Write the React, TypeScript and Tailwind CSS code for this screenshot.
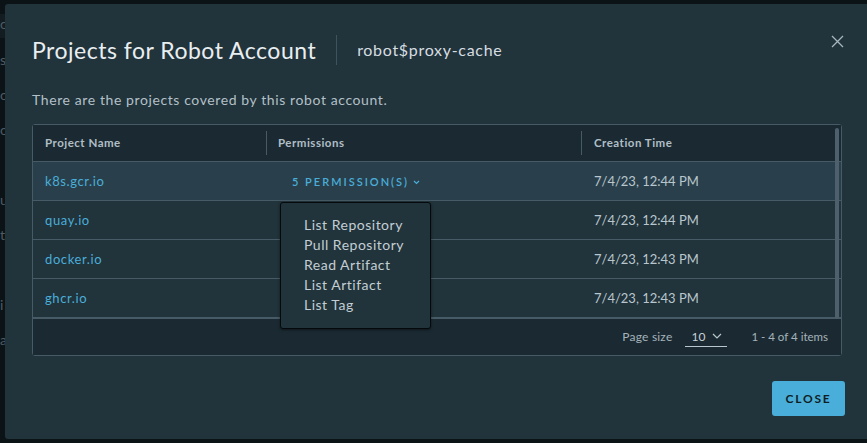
import React from "react";

const rows = [
  { name: "k8s.gcr.io", time: "7/4/23, 12:44 PM", hl: true },
  { name: "quay.io", time: "7/4/23, 12:44 PM", hl: false },
  { name: "docker.io", time: "7/4/23, 12:43 PM", hl: false },
  { name: "ghcr.io", time: "7/4/23, 12:43 PM", hl: false },
];

const perms = ["List Repository", "Pull Repository", "Read Artifact", "List Artifact", "List Tag"];

export default function App() {
  return (
    <div
      className="relative w-[867px] h-[443px] overflow-hidden bg-[#0b1317]"
      style={{ fontFamily: "Lato, 'Open Sans', sans-serif" }}
    >
      {/* backdrop */}
      <div className="flex flex-col text-[14px] text-[#4f5b63] leading-[20px] pt-[14px]">
        <div className="h-[24px] bg-[#121c21] pl-0">c</div>
        <div className="h-[35px] pt-[12px]">s</div>
        <div className="h-[35px] pt-[12px]">o</div>
        <div className="h-[70px] pt-[12px]">o</div>
        <div className="h-[35px] pt-[12px]">u</div>
        <div className="h-[70px] pt-[12px]">t</div>
        <div className="h-[35px] pt-[12px]">i</div>
        <div className="h-[35px] pt-[12px]">a</div>
      </div>

      {/* modal */}
      <div className="absolute left-[5px] top-[4px] w-[875px] h-[435px] bg-[#21333b] rounded-[3px] pl-[27px]">
        <div className="flex items-center pt-[31px] h-[61px]">
          <div className="text-[23px] text-[#e9eef1] leading-[30px] tracking-[0.5px]">Projects for Robot Account</div>
          <div className="w-px h-[30px] bg-[#3e5360] mx-[20px]" />
          <div className="text-[16px] text-[#d6dde1] leading-[30px] tracking-[0.7px]">robot$proxy-cache</div>
          <svg className="ml-auto mr-[36px] -mt-[18px]" width="13" height="13" viewBox="0 0 13 13">
            <path d="M1 1 L12 12 M12 1 L1 12" stroke="#a8b6bf" strokeWidth="1.3" />
          </svg>
        </div>

        <div className="mt-[25px] text-[14px] leading-[20px] text-[#b3c0c8] tracking-[0.6px]">
          There are the projects covered by this robot account.
        </div>

        {/* table */}
        <div className="relative mt-[14px] w-[810px] border border-[#475b66] rounded-[3px]">
          {/* header */}
          <div className="flex h-[37px] bg-[#1b2a32] border-b border-[#475b66] text-[11.5px] font-bold text-[#b0bec6] tracking-[0.5px]">
            <div className="w-[233px] flex items-center pl-[12px]">Project Name</div>
            <div className="w-[315px] flex items-center">
              <div className="w-px h-[24px] bg-[#475b66]" />
              <div className="pl-[11px]">Permissions</div>
            </div>
            <div className="flex-1 flex items-center">
              <div className="w-px h-[24px] bg-[#475b66]" />
              <div className="pl-[12px]">Creation Time</div>
            </div>
          </div>

          {rows.map((r, i) => (
            <div
              key={r.name}
              className={
                "flex h-[39px] pt-[2px] border-b border-[#475b66] text-[13px] " +
                (r.hl ? "bg-[#29404c]" : "bg-[#21333b]")
              }
            >
              <div className="w-[233px] flex items-center pl-[12px] text-[#4aaed9] tracking-[0.6px]">{r.name}</div>
              <div className="w-[315px] flex items-center pl-[26px]">
                {i === 0 && (
                  <div className="flex items-center gap-[4px] text-[11px] tracking-[2px] text-[#4aaed9] font-semibold">
                    5 PERMISSION(S)
                    <svg width="7" height="5" viewBox="0 0 7 5">
                      <path d="M1 1 L3.5 3.5 L6 1" stroke="#4aaed9" strokeWidth="1.2" fill="none" />
                    </svg>
                  </div>
                )}
              </div>
              <div className="flex-1 flex items-center pl-[13px] text-[#b9c6cd]">{r.time}</div>
            </div>
          ))}

          {/* footer */}
          <div className="flex items-center justify-end h-[37px] bg-[#1b2a32] border-t border-[#475b66] text-[12px] text-[#a5b3bb] pr-[13px]">
            <span className="tracking-[0.2px]">Page size</span>
            <div className="ml-[13px] w-[42px] h-[20px] border-b border-[#b9c6cd] flex items-center pl-[6px] text-[#c8d2d8] relative">
              <span>10</span>
              <svg className="absolute right-[5px] top-[6px]" width="10" height="6" viewBox="0 0 10 6">
                <path d="M1 1 L5 5 L9 1" stroke="#b9c6cd" strokeWidth="1.2" fill="none" />
              </svg>
            </div>
            <span className="ml-[24px] text-[11.5px]">1 - 4 of 4 items</span>
          </div>

          {/* scrollbar */}
          <div className="absolute right-[2px] top-[3px] w-[4px] h-[191px] rounded-[2px] bg-[#4d606b]" />

          {/* dropdown */}
          <div className="absolute left-[247px] top-[77px] w-[151px] h-[127px] bg-[#21333b] border border-[#05090b] rounded-[3px] pt-[12px] pl-[23px] shadow-[0_1px_3px_rgba(0,0,0,0.5)]">
            {perms.map((p) => (
              <div key={p} className="text-[14px] leading-[20px] text-[#c3ced4] tracking-[0.5px]">{p}</div>
            ))}
          </div>
        </div>

        <div className="w-[813px] flex justify-end mt-[25px]">
          <button className="w-[73px] h-[35px] rounded-[3px] bg-[#49aed9] text-[#0f1d24] text-[12px] font-bold tracking-[1.8px]">
            CLOSE
          </button>
        </div>
      </div>
    </div>
  );
}
